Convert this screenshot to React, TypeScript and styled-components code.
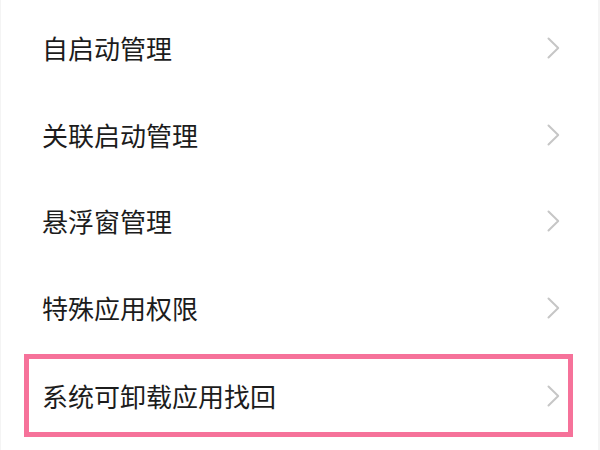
import React from "react";
import styled, { createGlobalStyle } from "styled-components";

const GlobalStyle = createGlobalStyle`
  html, body {
    margin: 0;
    padding: 0;
    background: #ffffff;
  }
  body {
    font-family: "Noto Sans CJK SC", "Noto Sans", sans-serif;
  }
`;

const Page = styled.div`
  width: 600px;
  height: 450px;
  box-sizing: border-box;
  background: #ffffff;
  border-left: 1px solid #f4f4f4;
  border-right: 2px solid #f4f4f4;
  overflow: hidden;
`;

const List = styled.div`
  display: flex;
  flex-direction: column;
  padding: 5px 25px 0 23px;
`;

const Row = styled.div<{ $highlighted?: boolean }>`
  display: flex;
  align-items: center;
  justify-content: space-between;
  box-sizing: border-box;
  height: ${(p) => (p.$highlighted ? "83px" : "86.5px")};
  margin-top: ${(p) => (p.$highlighted ? "3px" : "0")};
  padding: 0 8px 0 13px;
  border: 5px solid ${(p) => (p.$highlighted ? "#f6729a" : "transparent")};
`;

const Label = styled.span`
  font-size: 26px;
  line-height: 1;
  color: #1c1c1c;
`;

const Chevron = () => (
  <svg width="13" height="22" viewBox="0 0 13 22" fill="none">
    <path
      d="M1.5 1.5 L11.2 11 L1.5 20.5"
      stroke="#c6c6c6"
      strokeWidth="2"
      strokeLinecap="round"
      strokeLinejoin="round"
    />
  </svg>
);

const items = [
  { label: "自启动管理" },
  { label: "关联启动管理" },
  { label: "悬浮窗管理" },
  { label: "特殊应用权限" },
  { label: "系统可卸载应用找回", highlighted: true },
];

export default function App() {
  return (
    <>
      <GlobalStyle />
      <Page>
        <List>
          {items.map((item) => (
            <Row key={item.label} $highlighted={item.highlighted}>
              <Label>{item.label}</Label>
              <Chevron />
            </Row>
          ))}
        </List>
      </Page>
    </>
  );
}
